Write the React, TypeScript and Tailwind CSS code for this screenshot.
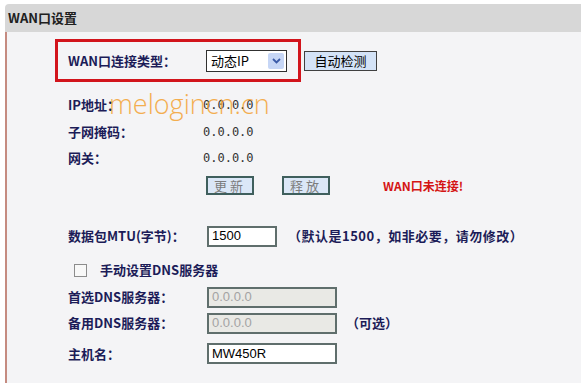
const cjk = '"Noto Sans CJK SC", "Liberation Sans", sans-serif';

const Label = ({ children }: { children: React.ReactNode }) => (
  <div className="w-[139px] shrink-0 text-[13px] font-bold text-[#1c1c58]">{children}</div>
);

const Field = ({ value, disabled, w = 130 }: { value: string; disabled?: boolean; w?: number }) => (
  <div
    className={
      "flex h-[21px] items-center border-2 border-[#5f6e6c] px-[3px] text-[13px] " +
      (disabled ? "bg-[#e9e9e5] text-[#a3a3a3]" : "bg-white text-black")
    }
    style={{ width: w, fontFamily: '"Liberation Sans", Arial, sans-serif' }}
  >
    {value}
  </div>
);

const GrayBtn = ({ children }: { children: React.ReactNode }) => (
  <div className="flex h-[19px] w-[48px] items-center justify-center border-2 border-[#3f5f5d] bg-[#dbe7f7] text-[13px] tracking-[3px] text-[#7d7d7d]">
    {children}
  </div>
);

const mono = { fontFamily: '"DejaVu Sans Mono", monospace' };

export default function App() {
  return (
    <div className="relative h-[383px] w-[581px] overflow-hidden bg-white pt-[4px]" style={{ fontFamily: cjk }}>
      {/* header */}
      <div className="ml-[5px] flex h-[28px] items-center rounded-tl-[4px] bg-[#d7d7d7] pl-[3px] text-[13px] font-bold text-[#202020]">
        WAN口设置
      </div>
      {/* body */}
      <div className="ml-[5px] h-[351px] border-l-2 border-[#c58b80] bg-[#f4f4f6] pt-[7px]">
        <div className="flex items-center">
          <div className="ml-[48px] flex h-[43px] w-[246px] items-center border-[3px] border-[#d2141c] pl-[10px]">
            <Label>WAN口连接类型：</Label>
            <div className="-ml-[1px] flex h-[22px] w-[81px] items-center justify-between border border-[#303030] bg-white pl-[4px] pr-[2px] text-[13px] text-black">
              <span>动态IP</span>
              <span className="flex h-[16px] w-[16px] items-center justify-center rounded-[2px] bg-[#c6d6f6]">
                <svg width="9" height="6" viewBox="0 0 9 6">
                  <path d="M1 1 L4.5 4.5 L8 1" stroke="#3a5aa8" strokeWidth="1.8" fill="none" />
                </svg>
              </span>
            </div>
          </div>
          <div className="ml-[3px] flex h-[20px] w-[73px] items-center justify-center border border-[#404040] bg-[#d4e3f7] text-[13px] text-black">
            自动检测
          </div>
        </div>

        <div className="pl-[61px]">
          <div className="mt-[10px] flex h-[26px] items-center">
            <Label>IP地址：</Label>
            <span className="-ml-[4px] text-[12px] text-[#333]" style={mono}>0.0.0.0</span>
          </div>
          <div className="flex h-[27px] items-center">
            <Label>子网掩码：</Label>
            <span className="-ml-[4px] text-[12px] text-[#333]" style={mono}>0.0.0.0</span>
          </div>
          <div className="flex h-[26px] items-center">
            <Label>网关：</Label>
            <span className="-ml-[4px] text-[12px] text-[#333]" style={mono}>0.0.0.0</span>
          </div>
          <div className="mt-[5px] flex items-center">
            <div className="w-[138px] shrink-0" />
            <GrayBtn>更新</GrayBtn>
            <div className="ml-[28px]">
              <GrayBtn>释放</GrayBtn>
            </div>
            <span className="ml-[53px] text-[12px] font-bold text-[#d41414]">WAN口未连接!</span>
          </div>

          <div className="mt-[31px] flex h-[20px] items-center">
            <Label>数据包MTU(字节)：</Label>
            <Field value="1500" w={70} />
            <span className="ml-[11px] text-[13px] font-bold tracking-[0.5px] text-[#1c1c58]">（默认是1500，如非必要，请勿修改）</span>
          </div>

          <div className="mt-[14px] flex h-[20px] items-center pl-[6px]">
            <span className="h-[13px] w-[13px] border border-[#8c8c8c] bg-[#f8f8f8]" />
            <span className="ml-[13px] text-[13px] font-bold text-[#1c1c58]">手动设置DNS服务器</span>
          </div>

          <div className="mt-[7px] flex h-[20px] items-center">
            <Label>首选DNS服务器：</Label>
            <Field value="0.0.0.0" disabled />
          </div>
          <div className="mt-[6px] flex h-[20px] items-center">
            <Label>备用DNS服务器：</Label>
            <Field value="0.0.0.0" disabled />
            <span className="ml-[9px] text-[13px] font-bold text-[#1c1c58]">（可选）</span>
          </div>
          <div className="mt-[10px] flex h-[21px] items-center">
            <Label>主机名：</Label>
            <Field value="MW450R" />
          </div>
        </div>
      </div>

      {/* watermark */}
      <div
        className="pointer-events-none absolute left-[109px] top-[84px] text-[27px] font-light text-[#f3a233] opacity-85"
        style={{ fontFamily: '"Open Sans", sans-serif' }}
      >
        melogincn.cn
      </div>
    </div>
  );
}
